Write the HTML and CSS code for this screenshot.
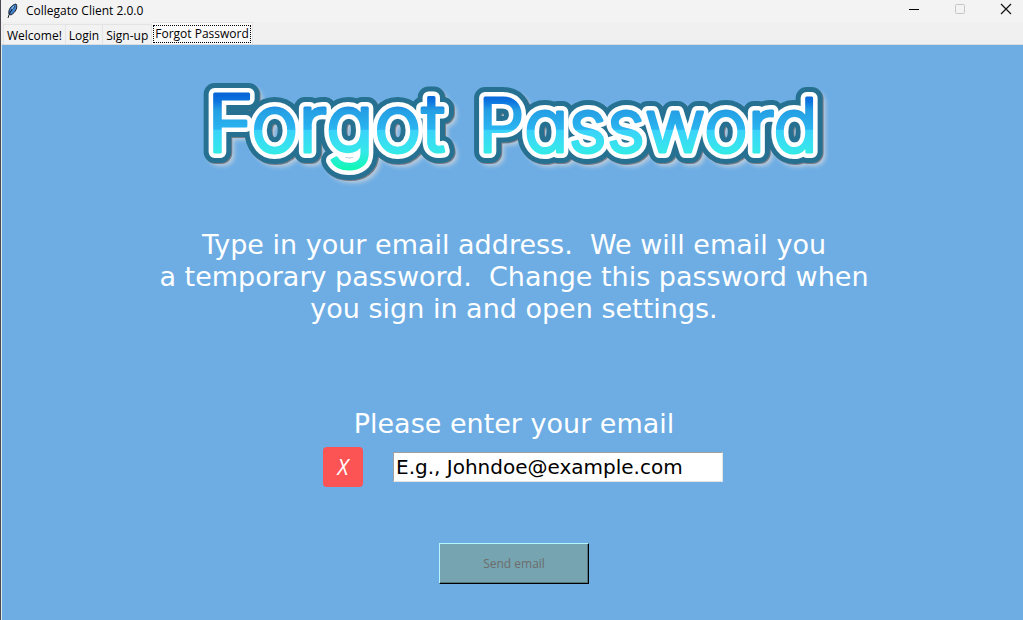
FILE: index.html
```html
<!DOCTYPE html>
<html lang="en">
<head>
<meta charset="utf-8">
<title>Collegato Client 2.0.0</title>
<link rel="stylesheet" href="styles.css">
</head>
<body>
<div class="window">
  <header class="titlebar">
    <svg class="app-icon" width="12" height="16" viewBox="0 0 12 16" aria-hidden="true">
      <path d="M2 11C1 7 4 2 9 1c2 3 0 8-5 11z" fill="#4484cc" stroke="#14202e"/>
      <path d="M1 15C2 11 4 7 8 3" fill="none" stroke="#111c2c"/>
      <path d="M7 3L5 6" stroke="#a8d0f5"/>
    </svg>
    <span class="app-title">Collegato Client 2.0.0</span>
    <div class="window-controls">
      <button class="window-button" type="button" aria-label="Minimize"><svg width="12" height="12" viewBox="0 0 12 12"><path d="M1 6.5h10" stroke="#000"/></svg></button>
      <button class="window-button" type="button" aria-label="Maximize" disabled><svg width="12" height="12" viewBox="0 0 12 12"><rect x="1.5" y="1.5" width="9" height="9" rx="1" fill="none" stroke="#c4c4c4"/></svg></button>
      <button class="window-button" type="button" aria-label="Close"><svg width="12" height="12" viewBox="0 0 12 12"><path d="M1 1l10 10M11 1L1 11" stroke="#111" stroke-width="1.2"/></svg></button>
    </div>
  </header>
  <nav class="tabs" role="tablist">
    <button class="tab" type="button" role="tab">Welcome!</button>
    <button class="tab" type="button" role="tab">Login</button>
    <button class="tab" type="button" role="tab">Sign-up</button>
    <button class="tab tab-active" type="button" role="tab" aria-selected="true"><span class="tab-focus">Forgot Password</span></button>
  </nav>
  <main class="page">
    <h1 class="banner">
      <svg width="640" height="120" viewBox="0 0 640 120" role="img" aria-label="Forgot Password">
        <defs>
          <linearGradient id="fill" gradientUnits="userSpaceOnUse" x1="0" y1="20" x2="0" y2="98">
            <stop offset="0" stop-color="#0866d8"/>
            <stop offset=".08" stop-color="#0c74e0"/>
            <stop offset=".2" stop-color="#259fe4"/>
            <stop offset=".44" stop-color="#2ab4f0"/>
            <stop offset=".45" stop-color="#3ad2fa"/>
            <stop offset=".72" stop-color="#36e8ea"/>
            <stop offset=".96" stop-color="#10f8b4"/>
          </linearGradient>
          <filter id="glow" x="-5%" y="-20%" width="110%" height="150%"><feGaussianBlur stdDeviation="2"/></filter>
          <g id="words"><text class="word-first" x="13" y="77">Forgot</text><text class="word-second" x="284" y="77">Password</text></g>
        </defs>
        <use href="#words" class="banner-glow" x="4" y="4" filter="url(#glow)"/>
        <use href="#words" class="banner-shade" x="1" y="1"/>
        <use href="#words" class="banner-rim"/>
        <use href="#words" class="banner-outline"/>
        <use href="#words" class="banner-fill"/>
      </svg>
    </h1>
    <p class="intro">Type in your email address.&nbsp; We will email you<br>a temporary password.&nbsp; Change this password when<br>you sign in and open settings.</p>
    <form class="form">
      <label class="email-label" for="email">Please enter your email</label>
      <div class="email-row">
        <button class="clear" type="button">X</button>
        <input class="email" id="email" type="text" value="E.g., Johndoe@example.com">
      </div>
      <button class="send" type="submit" disabled>Send email</button>
    </form>
  </main>
</div>
</body>
</html>
```
FILE: styles.css
```css
* { box-sizing: border-box; }
body {
  margin: 0;
  font-family: "Open Sans", "Noto Sans", sans-serif;
  font-size: 12px;
  color: #000;
}
button { font: inherit; color: inherit; }
.window {
  display: flex;
  flex-direction: column;
  min-height: 100vh;
  border-left: 1px solid #4a4a50;
  background: #f0f0f0;
}
.titlebar {
  display: flex;
  align-items: center;
  gap: 7px;
  height: 22px;
  padding-left: 6px;
  background: #f3f3f3;
}
.app-icon { flex: none; }
.app-title { line-height: 18px; }
.window-controls {
  display: flex;
  align-self: flex-start;
  margin-right: -6px;
  margin-left: auto;
}
.window-button {
  display: flex;
  align-items: center;
  justify-content: center;
  width: 46px;
  height: 18px;
  padding: 0;
  border: 0;
  background: none;
}
.tabs {
  display: flex;
  align-items: flex-end;
  height: 23px;
  padding-left: 2px;
  border-bottom: 1px solid #dcdcdc;
}
.tab {
  height: 20px;
  padding: 1px 3px 0;
  border: 1px solid #e3e3e3;
  border-left-width: 0;
  border-bottom: 0;
  background: #f2f2f2;
  line-height: 20px;
  white-space: nowrap;
}
.tab:first-child { border-left-width: 1px; }
.tab-active {
  height: 22px;
  padding: 0 1px;
  background: #fafafa;
}
.tab-focus {
  display: block;
  height: 18px;
  padding: 0 1px;
  border: 1px dotted #000;
  line-height: 16px;
}
.page {
  display: flex;
  flex: 1;
  flex-direction: column;
  align-items: center;
  padding: 30px 0 0 3px;
  border-left: 1px solid #dfe7ee;
  background: #6dade4;
}
.banner { margin: 0; }
.banner svg { display: block; }
.banner text {
  font-family: Inter, sans-serif;
  font-weight: 300;
  font-feature-settings: "cv11";
}
.word-first { font-size: 80px; }
.word-second { font-size: 74px; }
.banner use { stroke-linejoin: round; stroke-linecap: round; }
.banner-glow { fill: #b9cbdc; stroke: #b9cbdc; stroke-width: 20px; }
.banner-shade { fill: #777c86; stroke: #777c86; stroke-width: 22px; }
.banner-rim { fill: #267191; stroke: #267191; stroke-width: 22px; }
.banner-outline { fill: #fff; stroke: #fff; stroke-width: 12px; }
.banner-fill { fill: url(#fill); stroke: url(#fill); stroke-width: 3px; }
.intro {
  margin: 34px 0 0;
  color: #fff;
  font-family: Verdana, "DejaVu Sans", sans-serif;
  font-size: 27px;
  line-height: 32px;
  text-align: center;
}
.form {
  display: flex;
  flex-direction: column;
  align-items: center;
  margin-top: 82px;
}
.email-label {
  color: #fff;
  font-family: Verdana, "DejaVu Sans", sans-serif;
  font-size: 27px;
  line-height: 34px;
}
.email-row {
  display: flex;
  align-items: center;
  gap: 30px;
  margin-top: 6px;
  padding-left: 18px;
}
.clear {
  width: 40px;
  height: 40px;
  padding: 0;
  border: 0;
  border-radius: 4px;
  background: #fc5454;
  color: #fff;
  font-size: 21px;
  font-style: italic;
}
.email {
  width: 330px;
  height: 30px;
  padding: 0 2px;
  border: 1px solid #e3e3e3;
  border-top-color: #a0a0a0;
  border-left-color: #a0a0a0;
  border-radius: 0;
  background: #fff;
  color: #000;
  font-family: Verdana, "DejaVu Sans", sans-serif;
  font-size: 20px;
}
.send {
  width: 150px;
  height: 41px;
  margin-top: 56px;
  padding: 0;
  border: 1px solid #b5f5ff;
  border-right-color: #000;
  border-bottom-color: #000;
  background: #76a4b0;
  box-shadow: inset -1px -1px #56757c;
  color: #6d6d6d;
}
```
